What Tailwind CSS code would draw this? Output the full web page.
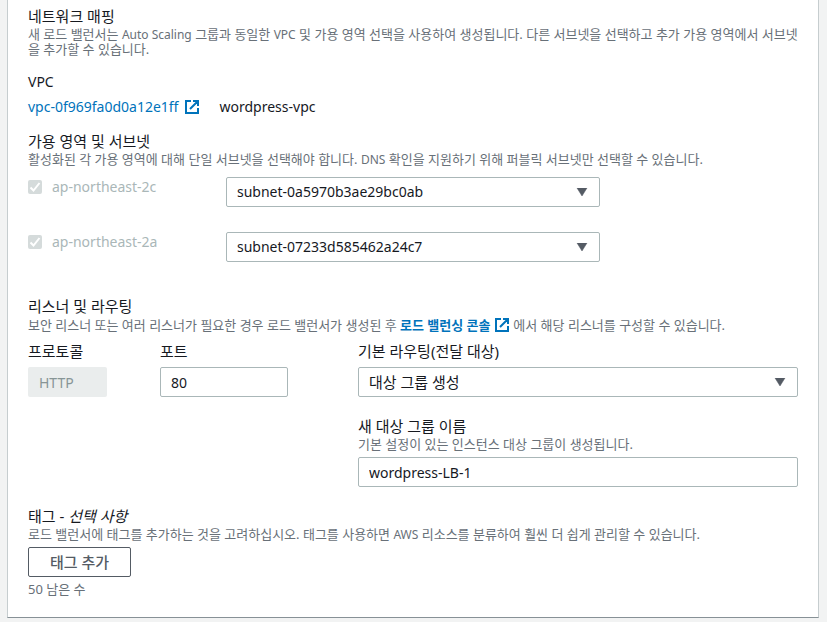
<!DOCTYPE html>
<html lang="ko">
<head>
    <meta charset="UTF-8">
    <meta name="viewport" content="width=device-width, initial-scale=1.0">
    <title>네트워크 매핑</title>
    <script src="https://cdn.jsdelivr.net/npm/@tailwindcss/browser@4"></script>
</head>
<body class="bg-[#f2f3f3] font-['Noto_Sans','Noto_Sans_CJK_KR',sans-serif] text-[14px] leading-[22px] text-[#16191f]">
    <main class="ml-[7px] mr-2 border-x border-b border-x-[#c6cdcf] border-b-[#879196] bg-white px-5 pt-[5px] pb-5">
        <!-- Network mapping -->
        <section>
            <h2 class="text-[15px]">네트워크 매핑</h2>
            <p class="text-[13px] leading-[15px] text-[#687078] break-all">새 로드 밸런서는 <span class="text-[12px]">Auto Scaling</span> 그룹과 동일한 <span class="text-[12px]">VPC</span> 및 가용 영역 선택을 사용하여 생성됩니다. 다른 서브넷을 선택하고 추가 가용 영역에서 서브넷을 추가할 수 있습니다.</p>
            <h3 class="mt-[14px]">VPC</h3>
            <div class="mt-[3px] flex items-center gap-5">
                <a href="#" class="flex items-center gap-[5px] text-[#0073bb]">vpc-0f969fa0d0a12e1ff
                    <svg class="size-4" viewBox="0 0 16 16" fill="none" stroke="currentColor" stroke-width="2"><path d="M7 2H2v12h12V9M9 2h5v5M14 2L6 10"/></svg>
                </a>
                <span>wordpress-vpc</span>
            </div>
        </section>

        <!-- Availability zones -->
        <section class="mt-3">
            <h3 class="text-[15px]">가용 영역 및 서브넷</h3>
            <p class="text-[13px] leading-[15px] text-[#687078]">활성화된 각 가용 영역에 대해 단일 서브넷을 선택해야 합니다. <span class="text-[12px]">DNS</span> 확인을 지원하기 위해 퍼블릭 서브넷만 선택할 수 있습니다.</p>
            <div class="mt-[10px] grid grid-cols-[9fr_17fr_9fr] gap-y-[25px]">
                <label class="col-start-1 flex h-5 items-center gap-[10px] text-[#aab7b8]">
                    <span class="grid">
                        <input type="checkbox" checked disabled class="col-start-1 row-start-1 size-[14px] appearance-none rounded-xs bg-[#d5dbdb]">
                        <svg class="pointer-events-none col-start-1 row-start-1 size-[14px]" viewBox="0 0 14 14" fill="none" stroke="#fff" stroke-width="2"><path d="M2.5 7.5L5.5 10.5L11.5 3"/></svg>
                    </span>
                    ap-northeast-2c
                </label>
                <div class="col-start-2 grid items-center">
                    <select aria-label="ap-northeast-2c 서브넷" class="col-start-1 row-start-1 h-[30px] w-full appearance-none rounded-xs border border-[#aab7b8] bg-white px-[10px]">
                        <option>subnet-0a5970b3ae29bc0ab</option>
                    </select>
                    <svg class="pointer-events-none col-start-1 row-start-1 mr-3 h-2 w-3 justify-self-end" viewBox="0 0 12 8" fill="#545b64"><path d="M1 0h10L6 8z" stroke="#545b64" stroke-linejoin="round" stroke-width=".5"/></svg>
                </div>
                <label class="col-start-1 flex h-5 items-center gap-[10px] text-[#aab7b8]">
                    <span class="grid">
                        <input type="checkbox" checked disabled class="col-start-1 row-start-1 size-[14px] appearance-none rounded-xs bg-[#d5dbdb]">
                        <svg class="pointer-events-none col-start-1 row-start-1 size-[14px]" viewBox="0 0 14 14" fill="none" stroke="#fff" stroke-width="2"><path d="M2.5 7.5L5.5 10.5L11.5 3"/></svg>
                    </span>
                    ap-northeast-2a
                </label>
                <div class="col-start-2 grid items-center">
                    <select aria-label="ap-northeast-2a 서브넷" class="col-start-1 row-start-1 h-[30px] w-full appearance-none rounded-xs border border-[#aab7b8] bg-white px-[10px]">
                        <option>subnet-07233d585462a24c7</option>
                    </select>
                    <svg class="pointer-events-none col-start-1 row-start-1 mr-3 h-2 w-3 justify-self-end" viewBox="0 0 12 8" fill="#545b64"><path d="M1 0h10L6 8z" stroke="#545b64" stroke-linejoin="round" stroke-width=".5"/></svg>
                </div>
            </div>
        </section>

        <!-- Listeners and routing -->
        <section class="mt-[33px]">
            <h3 class="text-[15px]">리스너 및 라우팅</h3>
            <p class="text-[13px] leading-4 text-[#687078]">보안 리스너 또는 여러 리스너가 필요한 경우 로드 밸런서가 생성된 후 <a href="#" class="font-bold text-[#0073bb]">로드 밸런싱 콘솔 <svg class="inline size-4 align-top" viewBox="0 0 16 16" fill="none" stroke="currentColor" stroke-width="2"><path d="M7 2H2v12h12V9M9 2h5v5M14 2L6 10"/></svg></a> 에서 해당 리스너를 구성할 수 있습니다.</p>
            <div class="mt-[7px] grid grid-cols-[6fr_9fr_20fr]">
                <div>
                    <label for="protocol" class="block text-[15px]">프로토콜</label>
                    <input id="protocol" type="text" value="HTTP" disabled class="mt-[5px] block h-[30px] w-3/5 rounded-xs bg-[#eaeded] px-[11px] text-[#879596]">
                </div>
                <div>
                    <label for="port" class="block text-[15px]">포트</label>
                    <input id="port" type="text" value="80" class="mt-[5px] block h-[30px] w-32 rounded-xs border border-[#aab7b8] px-[10px]">
                </div>
                <div>
                    <label for="routing" class="block text-[15px]">기본 라우팅(전달 대상)</label>
                    <div class="mt-[5px] grid items-center">
                        <select id="routing" class="col-start-1 row-start-1 h-[30px] w-full appearance-none rounded-xs border border-[#aab7b8] bg-white px-[10px] text-[15px]">
                            <option>대상 그룹 생성</option>
                        </select>
                        <svg class="pointer-events-none col-start-1 row-start-1 mr-3 h-2 w-3 justify-self-end" viewBox="0 0 12 8" fill="#545b64"><path d="M1 0h10L6 8z" stroke="#545b64" stroke-linejoin="round" stroke-width=".5"/></svg>
                    </div>
                    <label for="group" class="mt-[18px] block text-[15px]">새 대상 그룹 이름</label>
                    <p class="text-[13px] leading-[15px] text-[#687078]">기본 설정이 있는 인스턴스 대상 그룹이 생성됩니다.</p>
                    <input id="group" type="text" value="wordpress-LB-1" class="mt-[5px] block h-[30px] w-full rounded-xs border border-[#aab7b8] px-[10px]">
                </div>
            </div>
        </section>

        <!-- Tags -->
        <section class="mt-[18px]">
            <h3 class="text-[15px]">태그 - <i>선택 사항</i></h3>
            <p class="text-[13px] leading-[15px] text-[#687078]">로드 밸런서에 태그를 추가하는 것을 고려하십시오. 태그를 사용하면 <span class="text-[12px]">AWS</span> 리소스를 분류하여 훨씬 더 쉽게 관리할 수 있습니다.</p>
            <button type="button" class="mt-[5px] block h-[30px] rounded-xs border border-[#545b64] bg-white px-[21px] text-[15px] font-medium text-[#545b64]">태그 추가</button>
            <p class="mt-[5px] text-[13px] leading-[15px] text-[#687078]">50 남은 수</p>
        </section>
    </main>
</body>
</html>
